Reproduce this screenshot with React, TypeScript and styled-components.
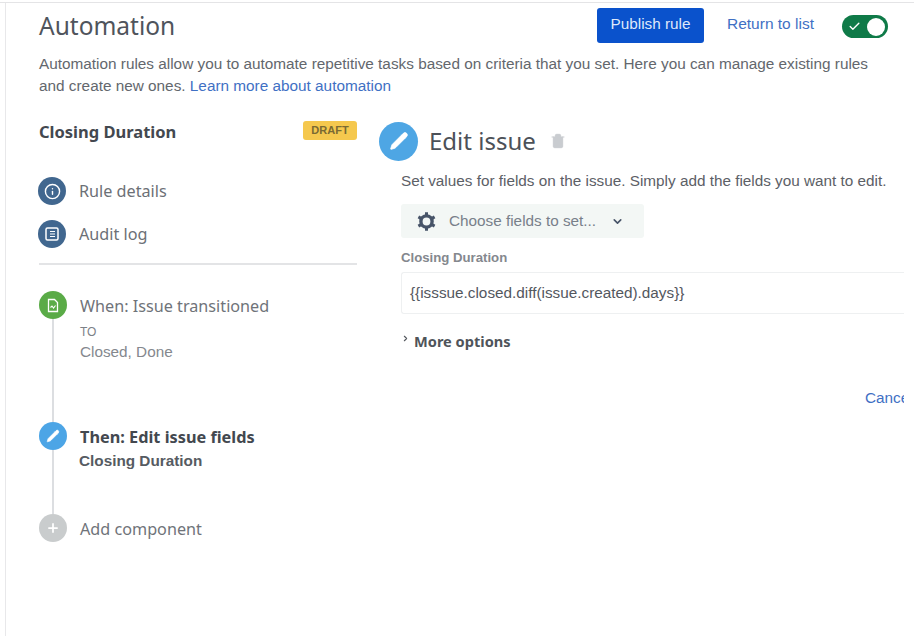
import React from "react";
import styled, { createGlobalStyle } from "styled-components";
import { ChevronDown, ChevronRight, Trash2, Pencil, Check, Info, Plus } from "lucide-react";

const Global = createGlobalStyle`
  html, body { margin: 0; padding: 0; background: #fff; overflow: hidden; }
  body { font-family: "Liberation Sans", Arial, sans-serif; color: #5e6a7c; }
`;

const Page = styled.div`
  width: 914px;
  height: 636px;
  box-sizing: border-box;
  padding-top: 2px;
  overflow: hidden;
`;

const Frame = styled.div`
  height: 634px;
  box-sizing: border-box;
  border-top: 1px solid #e4e4e6;
`;

const Inner = styled.div`
  height: 100%;
  box-sizing: border-box;
  margin-left: 5px;
  width: 899px;
  border-left: 1px solid #e8e8ea;
  padding-left: 33px;
  overflow: hidden;
`;

const Header = styled.header`
  display: flex;
  align-items: flex-start;
  height: 50px;
  padding-top: 5px;
  box-sizing: border-box;
`;

const Title = styled.h1`
  margin: 3px auto 0 0;
  font: 400 24.5px/30px "Noto Sans", "Open Sans", sans-serif;
  color: #4f545c;
`;

const Publish = styled.button`
  width: 107px;
  height: 35px;
  border: 0;
  border-radius: 3px;
  background: #0a52cc;
  color: #dfe8fa;
  font: 400 15.3px "Liberation Sans", Arial, sans-serif;
  padding: 0 0 3px;
`;

const HeaderLink = styled.a`
  margin: 6px 0 0 23px;
  font: 400 15.5px/20px "Liberation Sans", Arial, sans-serif;
  color: #3f70c4;
`;

const Toggle = styled.span`
  display: flex;
  align-items: center;
  justify-content: space-between;
  box-sizing: border-box;
  width: 46px;
  height: 23px;
  margin: 7px 16px 0 28px;
  padding: 0 3px 0 6px;
  border-radius: 12px;
  background: #0f7a48;
`;

const Knob = styled.i`
  display: block;
  width: 18px;
  height: 18px;
  border-radius: 50%;
  background: #fff;
`;

const Intro = styled.p`
  margin: 0;
  width: 840px;
  font-size: 15.34px;
  line-height: 22px;
  color: #63676d;
`;

const Learn = styled.a`
  color: #3f70c4;
`;

const Columns = styled.div`
  display: flex;
  margin-top: 24px;
  align-items: flex-start;
`;

const Side = styled.aside`
  width: 318px;
  flex: none;
`;

const RuleHead = styled.div`
  display: flex;
  justify-content: space-between;
  align-items: flex-start;
  height: 56px;
`;

const RuleName = styled.strong`
  margin-top: 1px;
  font: 700 16.5px/20px "Noto Sans", "Open Sans", sans-serif;
  color: #43484f;
`;

const Draft = styled.span`
  box-sizing: border-box;
  height: 19px;
  width: 54px;
  border-radius: 3px;
  background: #f5c84e;
  color: #7a6a33;
  font: 700 11px/18px "Liberation Sans", Arial, sans-serif;
  text-align: center;
`;

const NavItem = styled.div`
  display: flex;
  align-items: center;
  gap: 13px;
  height: 28px;
  margin-bottom: 15px;
  margin-left: -1px;
  font: 400 16.2px/20px "Noto Sans", "Open Sans", sans-serif;
  color: #6c7076;
`;

const Dot = styled.span<{ $bg: string; $size?: number }>`
  flex: none;
  display: flex;
  align-items: center;
  justify-content: center;
  width: ${(p) => p.$size ?? 28}px;
  height: ${(p) => p.$size ?? 28}px;
  border-radius: 50%;
  background: ${(p) => p.$bg};
  color: #fff;
`;

const Divider = styled.hr`
  margin: 5px 0 0;
  border: 0;
  border-top: 2px solid #e3e4e6;
`;

const Timeline = styled.div`
  margin-top: 26px;
`;

const Step = styled.div<{ $height: number; $line?: boolean }>`
  position: relative;
  display: flex;
  gap: 13px;
  height: ${(p) => p.$height}px;
  ${(p) =>
    p.$line
      ? `&::before {
    content: "";
    position: absolute;
    left: 13px;
    top: 28px;
    bottom: 0;
    width: 2px;
    background: #dcdee1;
  }`
      : ""}
`;

const StepBody = styled.div`
  padding-top: 4px;
`;

const StepTitle = styled.div<{ $bold?: boolean }>`
  font: ${(p) => (p.$bold ? 700 : 400)} ${(p) => (p.$bold ? 16.3 : 16.2)}px/22px "Noto Sans", "Open Sans", sans-serif;
  color: ${(p) => (p.$bold ? "#43484f" : "#6f7379")};
`;

const StepCaps = styled.div`
  font: 400 12px/14px "Liberation Sans", Arial, sans-serif;
  color: #7c8187;
  margin-top: 8px;
`;

const StepSub = styled.div<{ $strong?: boolean }>`
  font: ${(p) => (p.$strong ? 700 : 400)} 15.3px/20px "Liberation Sans", Arial, sans-serif;
  color: ${(p) => (p.$strong ? "#565b62" : "#84888e")};
  margin-top: 3px;
  margin-left: ${(p) => (p.$strong ? "-1px" : "0")};
`;

const Main = styled.main`
  flex: 1;
  min-width: 0;
  margin-left: 22px;
  overflow: hidden;
`;

const EditHead = styled.div`
  display: flex;
  align-items: center;
  height: 40px;
`;

const EditTitle = styled.h2`
  margin: 0 0 0 11px;
  font: 400 24px/34px "Noto Sans", "Open Sans", sans-serif;
  color: #4c5158;
`;

const Trash = styled.span`
  display: flex;
  margin-left: 14px;
  color: #c9ccd0;
`;

const Panel = styled.section`
  padding-left: 22px;
`;

const Lead = styled.p`
  margin: 10px 0 0;
  font-size: 15.3px;
  line-height: 20px;
  color: #5c6066;
  white-space: nowrap;
`;

const Picker = styled.button`
  display: flex;
  align-items: center;
  width: 243px;
  height: 34px;
  margin-top: 13px;
  padding: 0 0 0 15px;
  box-sizing: border-box;
  border: 0;
  border-radius: 3px;
  background: #f3f7f5;
  color: #78808a;
  font: 400 15.3px "Liberation Sans", Arial, sans-serif;
`;

const PickerText = styled.span`
  margin: 0 15px 0 12px;
  white-space: nowrap;
`;

const FieldLabel = styled.label`
  display: block;
  margin-top: 12px;
  font: 700 13.2px/16px "Liberation Sans", Arial, sans-serif;
  color: #84888e;
`;

const Field = styled.div`
  box-sizing: border-box;
  height: 42px;
  margin-top: 6px;
  width: 503px;
  padding-left: 8px;
  border: 1px solid #eef0f1;
  border-right: 0;
  border-radius: 3px 0 0 3px;
  font-size: 15.3px;
  line-height: 40px;
  color: #53575e;
  white-space: nowrap;
`;

const More = styled.div`
  display: flex;
  align-items: center;
  height: 22px;
  margin-top: 16px;
  color: #4f545a;
  font: 700 14.6px/22px "Noto Sans", "Open Sans", sans-serif;
`;

const MoreIcon = styled.span`
  display: flex;
  width: 13px;
  margin-top: -6px;
  color: #55595f;
`;

const Actions = styled.div`
  display: flex;
  justify-content: flex-start;
  margin-top: 36px;
  padding-left: 464px;
  height: 20px;
  white-space: nowrap;
`;

const Cancel = styled.a`
  font: 400 15.3px/20px "Liberation Sans", Arial, sans-serif;
  color: #3f70c4;
`;

const AuditGlyph = () => (
  <svg width="16" height="16" viewBox="0 0 16 16" fill="none" stroke="#fff" strokeWidth="1.5">
    <rect x="2" y="2" width="12" height="12" rx="1.5" />
    <path d="M6 5.5h5M6 8h5M6 10.5h5" strokeWidth="1.1" />
  </svg>
);

const TriggerGlyph = () => (
  <svg width="14" height="15" viewBox="0 0 14 15" fill="none" stroke="#fff" strokeWidth="1.3">
    <path d="M2.5 1.5h6l3 3v9h-9z" />
    <path d="M4.5 9.5l1.5-1.5 1.5 2 2-2.5" strokeWidth="1.1" />
  </svg>
);

const GearGlyph = () => (
  <svg width="21" height="21" viewBox="0 0 21 21" fill="none" stroke="#475468">
    <circle cx="10.5" cy="10.5" r="5.6" strokeWidth="3.4" />
    <path
      d="M10.5 1.2v3M10.5 16.8v3M2.4 5.85l2.6 1.5M16 13.65l2.6 1.5M2.4 15.15l2.6-1.5M16 7.35l2.6-1.5"
      strokeWidth="3"
    />
  </svg>
);

export default function App() {
  return (
    <Page>
      <Global />
      <Frame>
        <Inner>
          <Header>
            <Title>Automation</Title>
            <Publish>Publish rule</Publish>
            <HeaderLink>Return to list</HeaderLink>
            <Toggle>
              <Check size={13} color="#fff" strokeWidth={2.5} />
              <Knob />
            </Toggle>
          </Header>
          <Intro>
            Automation rules allow you to automate repetitive tasks based on criteria that you set. Here you can manage
            existing rules and create new ones. <Learn>Learn more about automation</Learn>
          </Intro>
          <Columns>
            <Side>
              <RuleHead>
                <RuleName>Closing Duration</RuleName>
                <Draft>DRAFT</Draft>
              </RuleHead>
              <NavItem>
                <Dot $bg="#41678f">
                  <Info size={17} strokeWidth={2} />
                </Dot>
                Rule details
              </NavItem>
              <NavItem>
                <Dot $bg="#41678f">
                  <AuditGlyph />
                </Dot>
                Audit log
              </NavItem>
              <Divider />
              <Timeline>
                <Step $height={131} $line>
                  <Dot $bg="#5aab47">
                    <TriggerGlyph />
                  </Dot>
                  <StepBody>
                    <StepTitle>When: Issue transitioned</StepTitle>
                    <StepCaps>TO</StepCaps>
                    <StepSub>Closed, Done</StepSub>
                  </StepBody>
                </Step>
                <Step $height={92} $line>
                  <Dot $bg="#4ca5e6">
                    <Pencil size={14} fill="#fff" strokeWidth={1} />
                  </Dot>
                  <StepBody>
                    <StepTitle $bold>Then: Edit issue fields</StepTitle>
                    <StepSub $strong>Closing Duration</StepSub>
                  </StepBody>
                </Step>
                <Step $height={30}>
                  <Dot $bg="#c9cccd">
                    <Plus size={14} strokeWidth={3} />
                  </Dot>
                  <StepBody>
                    <StepTitle>Add component</StepTitle>
                  </StepBody>
                </Step>
              </Timeline>
            </Side>
            <Main>
              <EditHead>
                <Dot $bg="#4ea6e4" $size={39}>
                  <Pencil size={20} fill="#fff" strokeWidth={1} />
                </Dot>
                <EditTitle>Edit issue</EditTitle>
                <Trash>
                  <Trash2 size={16} fill="#c9ccd0" strokeWidth={1.5} />
                </Trash>
              </EditHead>
              <Panel>
                <Lead>Set values for fields on the issue. Simply add the fields you want to edit.</Lead>
                <Picker>
                  <GearGlyph />
                  <PickerText>Choose fields to set...</PickerText>
                  <ChevronDown size={13} color="#475468" strokeWidth={3} />
                </Picker>
                <FieldLabel>Closing Duration</FieldLabel>
                <Field>{"{{isssue.closed.diff(issue.created).days}}"}</Field>
                <More>
                  <MoreIcon>
                    <ChevronRight size={9} strokeWidth={3} />
                  </MoreIcon>
                  More options
                </More>
                <Actions>
                  <Cancel>Cancel</Cancel>
                </Actions>
              </Panel>
            </Main>
          </Columns>
        </Inner>
      </Frame>
    </Page>
  );
}
